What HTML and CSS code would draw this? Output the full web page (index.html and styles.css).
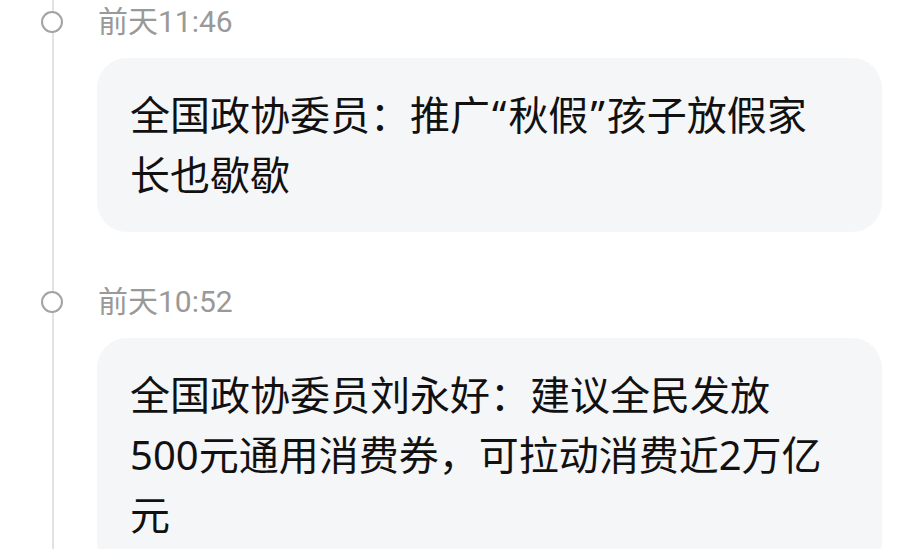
FILE: index.html
```html
<!DOCTYPE html>
<html>
    <head>
        <meta charset="utf-8">
        <link rel="stylesheet" href="styles.css">
    </head>
    <body>
        <div class="timeline">
            <div class="item">
                <div class="time"><span class="dot"></span>前天11:46</div>
                <div class="card">全国政协委员：推广<span class="q">“</span>秋假<span class="q">”</span>孩子放假家长也歇歇</div>
            </div>
            <div class="item">
                <div class="time"><span class="dot"></span>前天10:52</div>
                <div class="card">全国政协委员刘永好：建议全民发放500元通用消费券，可拉动消费近2万亿元</div>
            </div>
        </div>
    </body>
</html>
```

FILE: styles.css
```css
body{
    margin:0;
    background-color:#fff;
    font-family:"Noto Sans","Noto Sans CJK SC",sans-serif;
    overflow:hidden;
}

.timeline{
    position:relative;
    padding-left:97px;
    width:785px;
    min-height:549px;
}
.timeline::before{
    content:"";
    position:absolute;
    left:52px;
    top:0;
    bottom:0;
    width:2px;
    background-color:#e2e2e2;
}

.item{
    margin-bottom:48px;
}

.time{
    position:relative;
    height:44px;
    line-height:44px;
    font-family:Roboto,"Noto Sans CJK SC",sans-serif;
    font-size:30px;
    color:#999;
    padding-left:1px;
}
.dot{
    position:absolute;
    left:-56px;
    top:11px;
    width:18px;
    height:18px;
    border:2.5px solid #a3a3a3;
    border-radius:50%;
    background-color:#fff;
}

.card{
    margin-top:14px;
    background-color:#f5f6f8;
    border-radius:30px;
    padding:27px 47px 27px 33px;
    font-size:40px;
    line-height:60px;
    color:#111;
}
.q{
    margin:0 2px;
}
```
